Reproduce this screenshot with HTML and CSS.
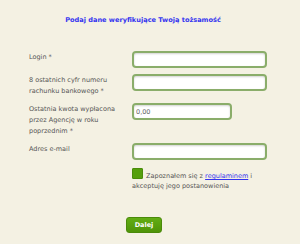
FILE: index.html
```html
<!DOCTYPE html>
<html lang="pl">
<head>
<meta charset="utf-8">
<link rel="stylesheet" href="styles.css">
</head>
<body>
<div class="page">
  <h1 class="title">Podaj dane weryfikujące Twoją tożsamość</h1>
  <form class="form">
    <label class="label">Login *</label>
    <div class="field"><input class="input" type="text"></div>
    <label class="label">8 ostatnich cyfr numeru rachunku bankowego *</label>
    <div class="field"><input class="input" type="text"></div>
    <label class="label">Ostatnia kwota wypłacona przez Agencję w roku poprzednim *</label>
    <div class="field"><input class="input input-short" type="text" value="0,00"></div>
    <label class="label">Adres e-mail</label>
    <div class="field"><input class="input" type="text"></div>
    <div class="spacer"></div>
    <div class="agree"><span class="check"></span> Zapoznałem się z <a href="#" class="link">regulaminem</a> i akceptuję jego postanowienia</div>
  </form>
  <div class="actions"><button class="btn" type="button">Dalej</button></div>
</div>
</body>
</html>
```
FILE: styles.css
```css
html, body {
  margin: 0;
  padding: 0;
  background: #f4f1e3;
}
body {
  font-family: "DejaVu Sans", Verdana, sans-serif;
  color: #555;
}
.page {
  width: 300px;
  height: 244px;
  box-sizing: border-box;
  padding-top: 15px;
}
.title {
  margin: 0;
  font-size: 6.6px;
  font-weight: bold;
  color: #3535f0;
  text-align: center;
  line-height: 10px;
  padding-right: 14px;
}
.form {
  display: grid;
  grid-template-columns: 103px 135px;
  column-gap: 0;
  row-gap: 6px;
  padding-left: 29px;
  margin-top: 26px;
  font-size: 6.5px;
  line-height: 11px;
  align-items: start;
}
.label {
  padding-top: 1px;
  width: 86px;
}
.input {
  display: block;
  box-sizing: border-box;
  width: 135px;
  height: 17px;
  border: 2px solid #8aad6a;
  border-radius: 4px;
  background: #fff;
  box-shadow: inset 0 1px 2px rgba(0,0,0,0.18);
  font-family: inherit;
  font-size: 6.5px;
  color: #666;
  padding: 0 2px;
  margin: 0;
  outline: none;
}
.input-short {
  width: 100px;
}
.agree {
  margin-top: 2px;
  width: 134px;
  line-height: 10px;
}
.check {
  display: inline-block;
  width: 11px;
  height: 11px;
  background: #55a00c;
  border: 1px solid #4a8c0a;
  box-sizing: border-box;
  border-radius: 1px;
  vertical-align: -1px;
  margin-right: 1px;
}
.link {
  color: #3333ee;
  text-decoration: underline;
}
.actions {
  padding-left: 126px;
  margin-top: 26px;
}
.btn {
  display: block;
  width: 36px;
  height: 16px;
  border: 1px solid #4a8a0a;
  border-radius: 3px;
  background: linear-gradient(#62ad14, #4f9408);
  color: #fff;
  font-family: inherit;
  font-weight: bold;
  font-size: 6.5px;
  padding: 0;
  cursor: pointer;
}
```
